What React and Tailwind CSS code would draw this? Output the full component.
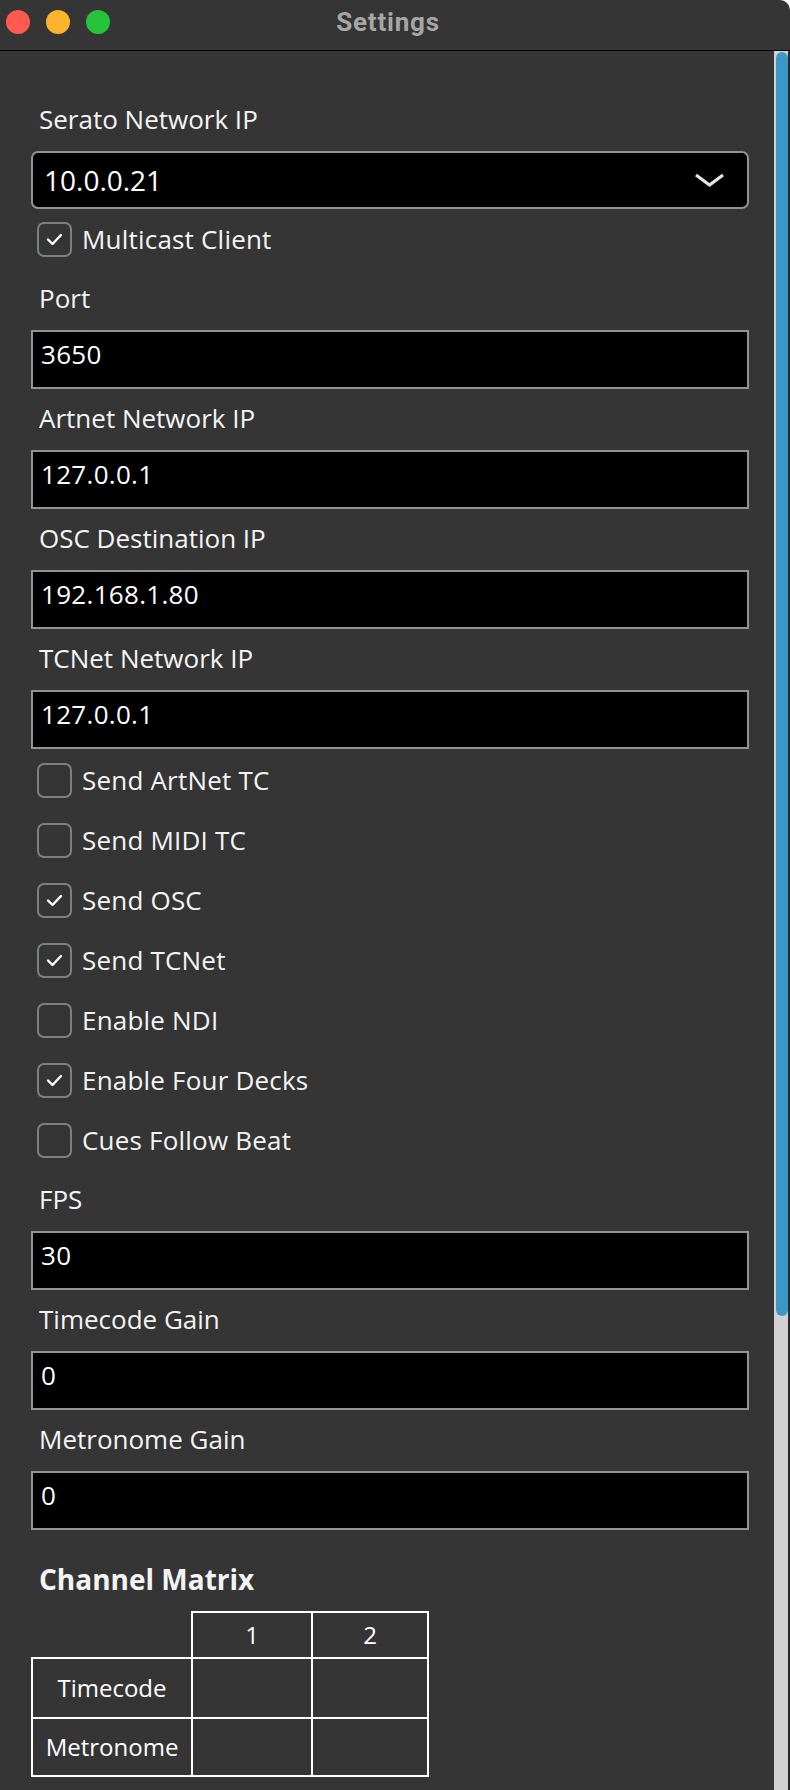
import React from "react";

const FONT = { fontFamily: '"Open Sans", "DejaVu Sans", sans-serif' };

function Label({ children, className = "" }) {
  return (
    <div className={"h-[34px] leading-[34px] text-[26px] text-[#f4f4f4] pl-[8px] whitespace-nowrap " + className}>
      {children}
    </div>
  );
}

function Field({ value, className = "" }) {
  return (
    <div className={"mt-[15px] h-[59px] border-2 border-[#8c9696] bg-black pl-[8px] pt-[5px] text-[26px] leading-[34px] text-white tracking-[0.3px] " + className}>
      {value}
    </div>
  );
}

function Group({ label, value }) {
  return (
    <div className="mt-[12px]">
      <Label>{label}</Label>
      <Field value={value} />
    </div>
  );
}

function Check({ checked, label }) {
  return (
    <div className="h-[60px] flex items-center pl-[6px] gap-[10px]">
      <div className="w-[35px] h-[35px] rounded-[7px] border-2 border-[#7b8080] flex items-center justify-center shrink-0">
        {checked && (
          <svg width="17" height="13" viewBox="0 0 17 13">
            <polyline points="2,6.5 6.5,11 15,2" fill="none" stroke="#ffffff" strokeWidth="2.4" strokeLinecap="round" strokeLinejoin="round" />
          </svg>
        )}
      </div>
      <span className="text-[26px] leading-[34px] text-[#f4f4f4] whitespace-nowrap tracking-[0.2px]">{label}</span>
    </div>
  );
}

export default function App() {
  return (
    <div className="w-[790px] h-[1790px] overflow-hidden bg-[#353535] flex flex-col rounded-tr-[10px]" style={FONT}>
      {/* Title bar */}
      <div className="h-[51px] shrink-0 border-b border-black grid grid-cols-[1fr_auto_1fr] items-start pt-[10px] pr-[14px]">
        <div className="flex gap-[16px] pl-[6px]">
          <div className="w-[24px] h-[24px] rounded-full bg-[#fe5a52]" />
          <div className="w-[24px] h-[24px] rounded-full bg-[#fdb42d]" />
          <div className="w-[24px] h-[24px] rounded-full bg-[#27c33b]" />
        </div>
        <div
          className="text-[26px] leading-[24px] font-bold text-[#a6a6a6] tracking-[0.8px]"
          style={{ fontFamily: 'Roboto, "Liberation Sans", sans-serif' }}
        >
          Settings
        </div>
        <div />
      </div>

      {/* Body */}
      <div className="flex-1 flex min-h-0">
        <div className="flex-1 pl-[31px] pr-[25px] pt-[51px]">
          <Label>Serato Network IP</Label>
          <div className="mt-[15px] h-[58px] rounded-[7px] border-2 border-[#8c9696] bg-black flex items-center justify-between pl-[11px] pr-[22px]">
            <span className="text-[28px] leading-[34px] text-white">10.0.0.21</span>
            <svg width="31" height="15" viewBox="0 0 31 15">
              <polyline points="2,2 15.5,12 29,2" fill="none" stroke="#e4e4e4" strokeWidth="3.2" />
            </svg>
          </div>
          <Check checked label="Multicast Client" />

          <Group label="Port" value="3650" />
          <Group label="Artnet Network IP" value="127.0.0.1" />
          <Group label="OSC Destination IP" value="192.168.1.80" />
          <Group label="TCNet Network IP" value="127.0.0.1" />

          <div className="mt-[1px]">
            <Check checked={false} label="Send ArtNet TC" />
            <Check checked={false} label="Send MIDI TC" />
            <Check checked label="Send OSC" />
            <Check checked label="Send TCNet" />
            <Check checked={false} label="Enable NDI" />
            <Check checked label="Enable Four Decks" />
            <Check checked={false} label="Cues Follow Beat" />
          </div>

          <Group label="FPS" value="30" />
          <Group label="Timecode Gain" value="0" />
          <Group label="Metronome Gain" value="0" />

          <Label className="mt-[32px] font-bold text-[28px]">Channel Matrix</Label>

          <div className="mt-[15px] grid grid-cols-[160px_120px_118px] grid-rows-[46px_60px_60px] text-[24px] text-white">
            <div />
            <div className="border-l-2 border-t-2 border-white flex items-center justify-center">1</div>
            <div className="border-l-2 border-t-2 border-r-2 border-white flex items-center justify-center">2</div>

            <div className="border-l-2 border-t-2 border-white flex items-center justify-center">Timecode</div>
            <div className="border-l-2 border-t-2 border-white" />
            <div className="border-l-2 border-t-2 border-r-2 border-white" />

            <div className="border-l-2 border-t-2 border-b-2 border-white flex items-center justify-center">Metronome</div>
            <div className="border-l-2 border-t-2 border-b-2 border-white" />
            <div className="border-l-2 border-t-2 border-r-2 border-b-2 border-white" />
          </div>
        </div>

        {/* Scrollbar */}
        <div className="w-[16px] shrink-0 flex">
          <div className="w-[14px] bg-[#d2d2d2] pl-[2px] pt-[1px]">
            <div className="w-[12px] h-[1264px] rounded-full bg-[#3a98c7]" />
          </div>
          <div className="w-[2px] bg-[#2a2a2a]" />
        </div>
      </div>
    </div>
  );
}
